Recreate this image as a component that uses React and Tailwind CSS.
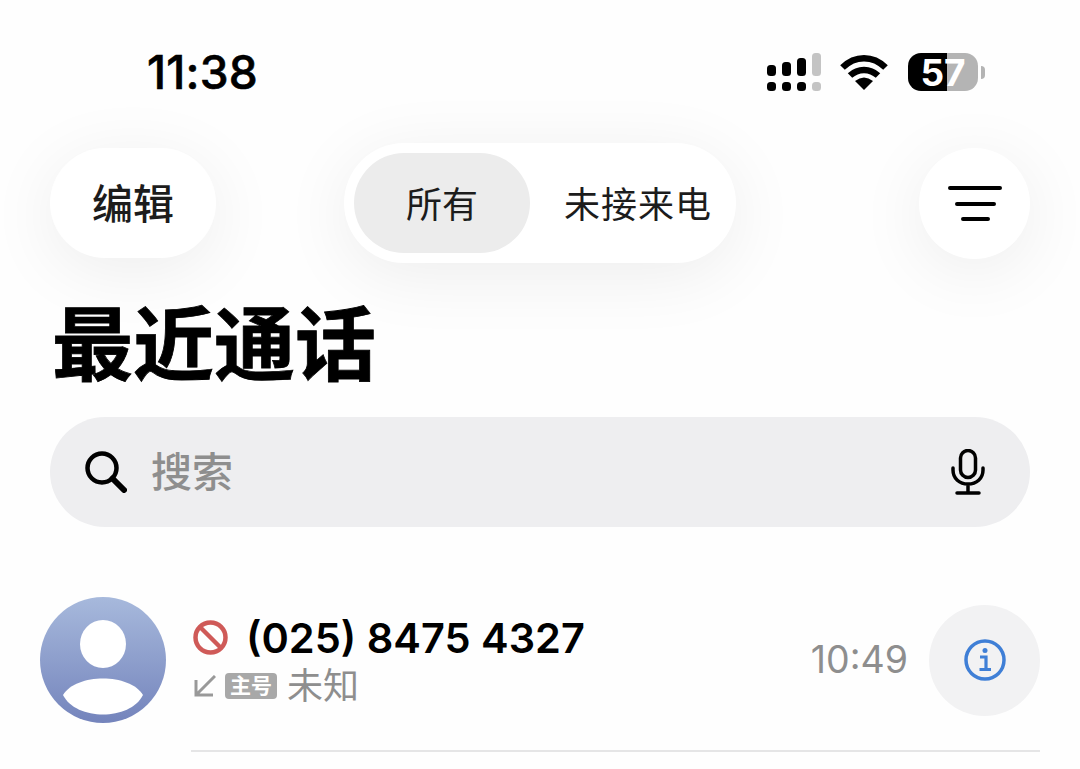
const cjk = "font-['Inter','Noto_Sans_CJK_SC',sans-serif]";

const SignalIcon = () => (
  <svg width="54" height="38" viewBox="0 0 54 38">
    <rect x="0" y="12" width="9" height="11" rx="3.5" fill="#000" />
    <rect x="15" y="9" width="9" height="14" rx="3.5" fill="#000" />
    <rect x="30" y="5" width="9" height="18" rx="3.5" fill="#000" />
    <rect x="45" y="0" width="9" height="23" rx="3.5" fill="#c4c4c4" />
    <rect x="0" y="29" width="9" height="9" rx="3.5" fill="#000" />
    <rect x="15" y="29" width="9" height="9" rx="3.5" fill="#000" />
    <rect x="30" y="29" width="9" height="9" rx="3.5" fill="#000" />
    <rect x="45" y="29" width="9" height="9" rx="3.5" fill="#c4c4c4" />
  </svg>
);

const WifiIcon = () => (
  <svg width="48" height="36" viewBox="0 0 48 36">
    <path d="M2.5 13.5C15 1 33 1 45.5 13.5" fill="none" stroke="#000" strokeWidth="6.5" />
    <path d="M10 21.5C18 14 30 14 38 21.5" fill="none" stroke="#000" strokeWidth="6.5" />
    <path d="M24 36L15 27Q24 20 33 27Z" fill="#000" />
  </svg>
);

const FilterIcon = () => (
  <svg width="54" height="38" viewBox="0 0 54 38">
    <path d="M2 4H52M9 20H46M15 35H40" stroke="#000" strokeWidth="4" strokeLinecap="round" />
  </svg>
);

const SearchIcon = () => (
  <svg width="42" height="42" viewBox="0 0 42 42">
    <circle cx="17" cy="17" r="14.5" fill="none" stroke="#000" strokeWidth="4.5" />
    <path d="M27.5 27.5L39 39" stroke="#000" strokeWidth="6" strokeLinecap="round" />
  </svg>
);

const MicIcon = () => (
  <svg width="34" height="46" viewBox="0 0 34 46">
    <rect x="9.5" y="1.5" width="15" height="27" rx="7.5" fill="none" stroke="#000" strokeWidth="3.5" />
    <path d="M2 19V21C2 29.5 8.5 35 17 35C25.5 35 32 29.5 32 21V19M17 35V43M6 44H28" fill="none" stroke="#000" strokeWidth="3.5" strokeLinecap="round" />
  </svg>
);

const BlockIcon = () => (
  <svg width="35" height="35" viewBox="0 0 35 35">
    <circle cx="17.5" cy="17.5" r="15" fill="none" stroke="#cf5a58" strokeWidth="4.5" />
    <path d="M7 7L28 28" stroke="#cf5a58" strokeWidth="4.5" />
  </svg>
);

const IncomingIcon = () => (
  <svg width="22" height="22" viewBox="0 0 22 22">
    <path d="M21 1L3 19M2 5V20H19" fill="none" stroke="#999" strokeWidth="3" />
  </svg>
);

const InfoIcon = () => (
  <svg width="42" height="42" viewBox="0 0 42 42">
    <circle cx="21" cy="21" r="19" fill="none" stroke="#3f7fd6" strokeWidth="3.5" />
    <circle cx="21" cy="11.5" r="2.5" fill="#3f7fd6" />
    <path d="M16 18H22V30M15.5 30.5H27" fill="none" stroke="#3f7fd6" strokeWidth="3.2" />
  </svg>
);

const Avatar = () => (
  <svg width="126" height="126" viewBox="0 0 126 126" className="shrink-0">
    <defs>
      <linearGradient id="avatarFill" x1="0" y1="0" x2="0" y2="1">
        <stop offset="0" stopColor="#a7b9dc" />
        <stop offset="1" stopColor="#7484bc" />
      </linearGradient>
    </defs>
    <circle cx="63" cy="63" r="63" fill="url(#avatarFill)" />
    <ellipse cx="63" cy="47" rx="23" ry="24" fill="#fff" />
    <path d="M23 98C36 76 90 76 103 98C90 124 36 124 23 98Z" fill="#fff" />
  </svg>
);

export default function App() {
  return (
    <div className={`w-[1080px] h-[769px] overflow-hidden bg-[#fefefe] text-black ${cjk}`}>
      {/* Status bar */}
      <div className="flex items-center h-[38px] mt-[53px] pl-[147px]">
        <span className="text-[46px] font-medium leading-none tracking-[0.2px] [-webkit-text-stroke:0.6px_#000]">11:38</span>
        <div className="ml-auto flex items-center">
          <SignalIcon />
          <div className="ml-[19px]">
            <WifiIcon />
          </div>
          <div className="ml-[20px] w-[70px] h-[38px] rounded-[13px] bg-[linear-gradient(90deg,#000_56%,#b4b4b4_56%)] flex items-center justify-center text-white text-[37px] font-bold leading-none">
            57
          </div>
          <div className="ml-[3px] w-[4px] h-[13px] rounded-r-full bg-[#b4b4b4] mr-[95px]" />
        </div>
      </div>

      {/* Nav */}
      <div className="grid grid-cols-[1fr_auto_1fr] items-center mt-[52px] px-[50px]">
        <button className="justify-self-start w-[166px] h-[110px] pt-[3px] rounded-full bg-white shadow-[0_12px_70px_rgba(0,0,0,0.07)] text-[41px] font-medium text-[#1c1c1c] leading-none">
          编辑
        </button>
        <div className="flex items-center w-[392px] h-[120px] rounded-full bg-white p-[10px] shadow-[0_12px_70px_rgba(0,0,0,0.07)] text-[36px] text-[#1c1c1c] leading-none">
          <div className="w-[176px] h-[100px] pt-[3px] rounded-full bg-[#ececec] flex items-center justify-center">所有</div>
          <div className="ml-[34px] pt-[3px] tracking-[1px]">未接来电</div>
        </div>
        <button className="justify-self-end w-[111px] h-[111px] rounded-full bg-white shadow-[0_12px_70px_rgba(0,0,0,0.07)] flex items-center justify-center">
          <FilterIcon />
        </button>
      </div>

      {/* Title */}
      <h1 className="mt-[40px] pl-[52px] text-[81px] leading-[84px] font-bold [-webkit-text-stroke:0.8px_#000]">最近通话</h1>

      {/* Search */}
      <div className="mx-[50px] mt-[30px] h-[110px] rounded-[55px] bg-[#eeeef0] flex items-center pl-[35px] pr-[45px]">
        <SearchIcon />
        <span className="ml-[24px] text-[41px] font-medium text-[#8e8e8e] leading-none">搜索</span>
        <div className="ml-auto">
          <MicIcon />
        </div>
      </div>

      {/* Call row */}
      <div className="flex items-center mt-[70px] pl-[40px] pr-[40px]">
        <Avatar />
        <div className="ml-[27px] flex flex-col">
          <div className="flex items-center gap-[18px]">
            <BlockIcon />
            <span className="text-[41.5px] font-semibold leading-[46px]">(025) 8475 4327</span>
          </div>
          <div className="flex items-center mt-[5px]">
            <div className="ml-[1px]">
              <IncomingIcon />
            </div>
            <span className="ml-[9px] w-[52px] h-[26px] rounded-[4px] bg-[#a8a8a8] text-white text-[21px] font-bold leading-none flex items-center justify-center">
              主号
            </span>
            <span className="ml-[10px] text-[36px] text-[#8e8e8e] leading-[40px]">未知</span>
          </div>
        </div>
        <span className="ml-auto text-[37.5px] text-[#8e8e8e] leading-none">10:49</span>
        <div className="ml-[21px] w-[111px] h-[111px] rounded-full bg-[#f2f2f3] flex items-center justify-center">
          <InfoIcon />
        </div>
      </div>

      <div className="ml-[191px] mr-[40px] mt-[27px] h-[2px] bg-[#e5e5e6]" />
    </div>
  );
}
